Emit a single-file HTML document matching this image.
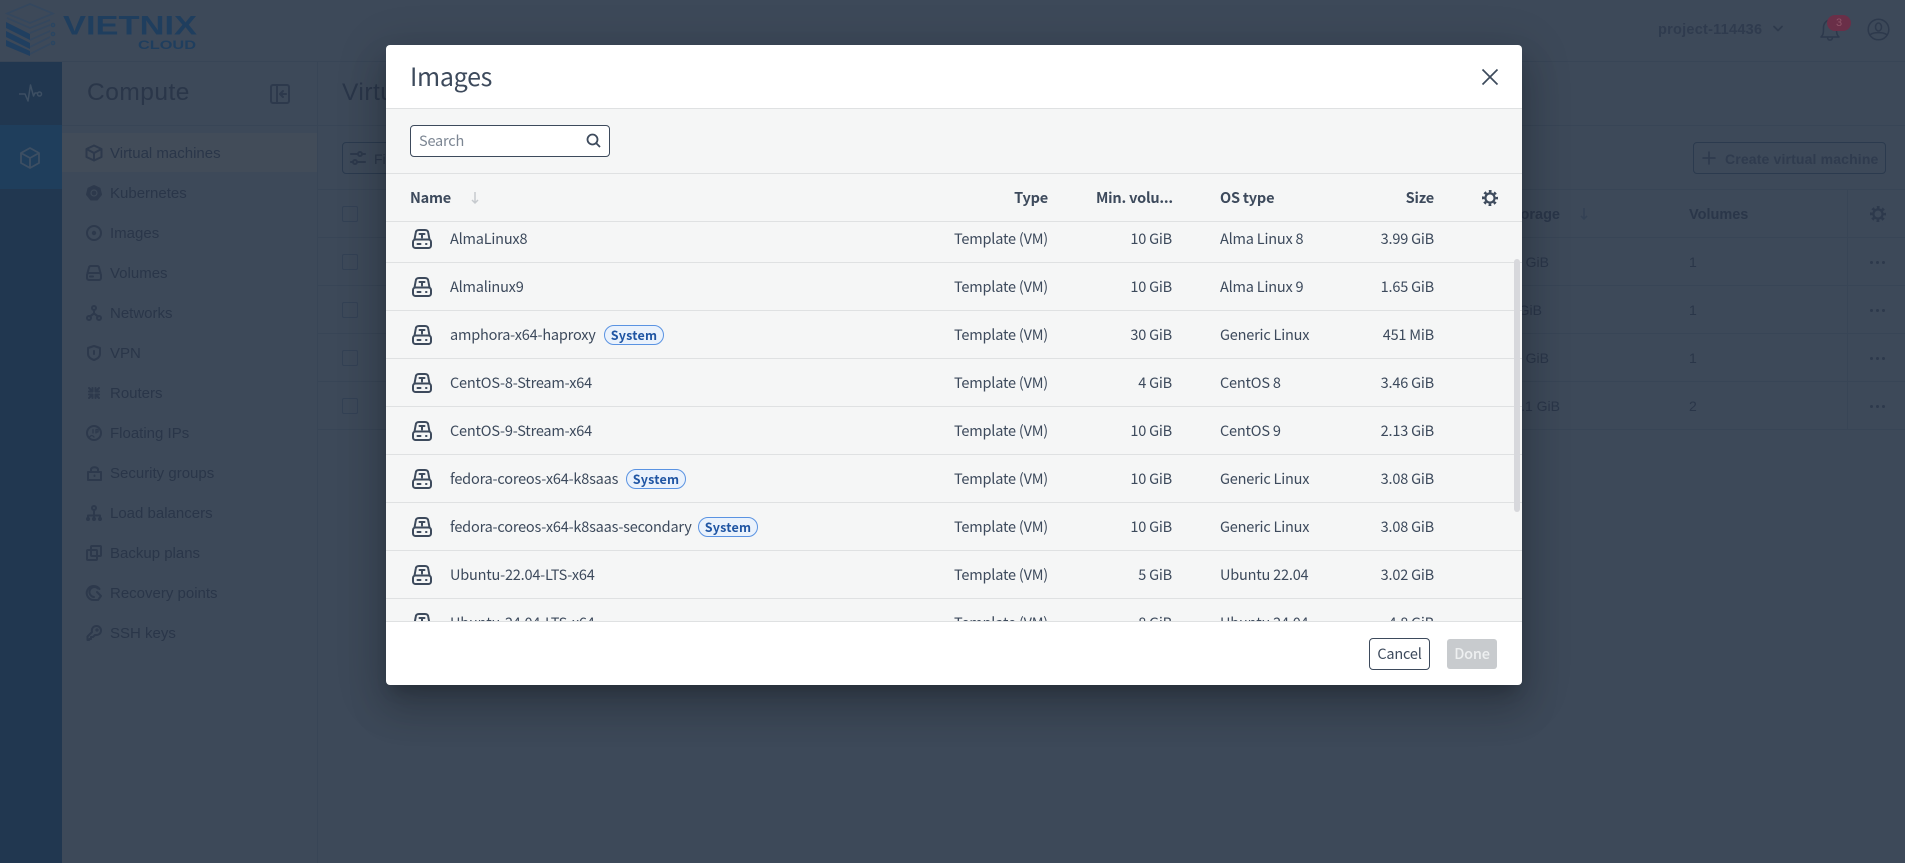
<!DOCTYPE html>
<html lang="en"><head><meta charset="utf-8"><title>Images</title>
<style>
html,body{margin:0;padding:0}
body{position:relative;width:1905px;height:863px;overflow:hidden;background:#3d4959;font-family:"Liberation Sans",sans-serif;color:#2a3649;font-size:14px}
.a{position:absolute}
.t{position:absolute;white-space:nowrap;line-height:20px;height:20px}
.ln{position:absolute;background:#384556}
svg{position:absolute;overflow:visible}
.si{fill:none;stroke:#2d394c;stroke-width:2;stroke-linecap:round;stroke-linejoin:round}
.nav{left:110px;font-size:15px;margin-top:1px}
.cb{position:absolute;left:342px;width:14px;height:14px;border:1px solid #334154;border-radius:2px}
.dots{position:absolute;left:1870px;width:18px;height:3px}
.dots i{float:left;width:3px;height:3px;border-radius:2px;background:#2d394c;margin-right:3px}
#m{position:absolute;left:386px;top:45px;width:1136px;height:640px;background:#fff;border-radius:4px;box-shadow:0 11px 15px -7px rgba(0,0,0,.2),0 24px 38px 3px rgba(0,0,0,.14),0 9px 46px 8px rgba(0,0,0,.12);font-family:"Noto Sans CJK JP","Liberation Sans",sans-serif;color:#3d4a5c;font-size:14.5px;letter-spacing:-.2px}
#m .t{line-height:20px}
#bar{position:absolute;left:0;top:64px;width:1136px;height:512px;background:#f5f6f6}
.d{position:absolute;left:0;width:1136px;height:1px;background:#dfe1e2}
#rows{position:absolute;left:0;top:177px;width:1136px;height:399px;overflow:hidden}
.r{position:relative;height:47px;border-bottom:1px solid #dfe1e2}
#rows .r:first-child{margin-top:-7px}
.r svg{left:26px;top:14px}
.n{left:64px;top:14px}
.ty{right:474px;top:14px}
.mv{right:350px;top:14px}
.os{left:834px;top:14px}
.sz{right:88px;top:14px}
.b{position:absolute;top:14px;height:18px;line-height:17px;width:58px;text-align:center;border:1px solid #5a93e2;border-radius:10px;background:#eaf2fc;color:#1f55a3;font-size:12.5px;font-weight:700;letter-spacing:.2px}
.h{font-weight:700;top:143px}
</style></head><body>

<!-- logo -->
<svg style="left:0;top:0" width="210" height="62" viewBox="0 0 210 62">
<g fill="none" stroke="#34475e" stroke-width="1.600"><path d="M7 13.500 30 4 53 13.500 30 23Z"/><path d="M7 18 30 28 50 20M30 33 50 25M30 40 50 31M30 47 50 37M30 54 50 44"/></g>
<g fill="#203f60"><path d="M6 22 30 34V40L6 28ZM6 31 30 43V49L6 37ZM6 40 30 51V56L6 46Z"/></g>
<g fill="none" stroke="#2a4561" stroke-width="1.400"><circle cx="53" cy="25" r="1.600"/><circle cx="53" cy="34" r="1.600"/><circle cx="53" cy="43" r="1.600"/></g>
<text x="63" y="34.500" font-family="Liberation Sans" font-weight="700" font-size="27" fill="#1f3e5e" textLength="134" lengthAdjust="spacingAndGlyphs">VIETNIX</text>
<text x="138" y="49" font-family="Liberation Sans" font-weight="700" font-size="12" fill="#1f3e5e" textLength="58" lengthAdjust="spacingAndGlyphs">CLOUD</text>
</svg>

<!-- top -->
<div class="ln" style="left:0;top:61px;width:1905px;height:1px"></div>
<div class="t" style="left:1658px;top:20px;font-weight:700;font-size:14.500px;color:#2f3b4e;letter-spacing:.25px">project-114436</div>
<svg style="left:1773px;top:25px" width="10" height="7" class="si"><path d="M1 1.500 5 5.500 9 1.500" stroke-width="1.600"/></svg>
<svg style="left:1820px;top:17px" width="22" height="24" class="si"><path d="M1 20C3.500 18 3.500 15 3.500 10.500 3.500 6 7 3 10 3S16.500 6 16.500 10.500C16.500 15 16.500 18 19 20ZM7.500 20.500C8 24 12 24 12.500 20.500" stroke-width="1.500"/></svg>
<div class="a" style="left:1827px;top:15px;width:24px;height:16px;border-radius:8px;background:#6a2f48;color:#8e5468;font-size:11px;line-height:16px;text-align:center">3</div>
<svg style="left:1867px;top:18px" width="23" height="23" class="si"><circle cx="11.500" cy="11.500" r="10.300" stroke-width="1.500"/><ellipse cx="11.500" cy="9" rx="3" ry="4" stroke-width="1.500"/><path d="M3.500 16.500C7 14 16 14 19.500 16.500" stroke-width="1.500"/></svg>

<!-- rail -->
<div class="a" style="left:0;top:62px;width:62px;height:801px;background:#213750"></div>
<div class="a" style="left:0;top:125px;width:62px;height:64px;background:#1f3e5c"></div>
<svg style="left:18px;top:83px" width="26" height="22" fill="none" stroke="#3d4f63" stroke-width="1.500" stroke-linejoin="round"><path d="M1 11H7L10 18 12.500 2 15.500 13 17 10H20"/><circle cx="21.500" cy="11" r="2"/></svg>
<svg style="left:20px;top:147px" width="20" height="22" fill="none" stroke="#3d4f63" stroke-width="1.800" stroke-linejoin="round"><path d="M10 1 19 6V16L10 21 1 16V6ZM1 6 10 11 19 6M10 11V21"/></svg>

<!-- sidebar -->
<div class="ln" style="left:317px;top:62px;width:1px;height:801px"></div>
<div class="ln" style="left:62px;top:125px;width:1843px;height:1px"></div>
<div class="t" style="left:87px;top:77px;height:32px;line-height:32px;font-size:24.500px;letter-spacing:.5px">Compute</div>
<svg style="left:270px;top:84px" width="20" height="20" class="si"><rect x="1" y="1" width="18" height="18" rx="2"/><path d="M7 1V19M16 10H10M13 7 10 10 13 13"/></svg>
<div class="a" style="left:62px;top:133px;width:255px;height:39px;background:#424c59"></div>

<svg style="left:86px;top:145px" width="16" height="16" class="si"><path d="M8 .5 15.500 4V12L8 15.500 .5 12V4ZM.5 4 8 8 15.500 4M8 8V15.500"/></svg>
<div class="t nav" style="top:143px">Virtual machines</div>
<svg style="left:86px;top:185px" width="16" height="16" class="si"><path d="M8 1 13.500 3.500 15 9.500 11 14.500H5L1 9.500 2.500 3.500Z" fill="#2d394c"/><circle cx="8" cy="8" r="3" stroke="#3d4959" stroke-width="1.200"/></svg>
<div class="t nav" style="top:183px">Kubernetes</div>
<svg style="left:86px;top:225px" width="16" height="16" class="si"><circle cx="8" cy="8" r="7"/><circle cx="8" cy="8" r="1.200" fill="#2d394c"/></svg>
<div class="t nav" style="top:223px">Images</div>
<svg style="left:86px;top:265px" width="16" height="16" class="si"><path d="M1.500 8 3 2.500Q3.300 1 5 1H11Q12.700 1 13 2.500L14.500 8"/><rect x="1" y="8" width="14" height="7" rx="2"/><path d="M4 11.500H7"/></svg>
<div class="t nav" style="top:263px">Volumes</div>
<svg style="left:86px;top:305px" width="16" height="16" class="si" stroke-width="1.500"><circle cx="8" cy="3" r="2"/><circle cx="3" cy="13" r="2"/><circle cx="13" cy="13" r="2"/><path d="M8 5V8.500L3.800 11.500M8 8.500 12.200 11.500"/></svg>
<div class="t nav" style="top:303px">Networks</div>
<svg style="left:87px;top:345px" width="14" height="16" class="si"><path d="M7 1 13 3V8.500C13 12 10 14 7 15 4 14 1 12 1 8.500V3ZM7 6V9"/></svg>
<div class="t nav" style="top:343px">VPN</div>
<svg style="left:88px;top:387px" width="12" height="12" class="si" stroke-width="1.800"><path d="M1 1 4.500 4.500M11 1 7.500 4.500M1 11 4.500 7.500M11 11 7.500 7.500M1 4.500H4.500V1M7.500 1V4.500H11M1 7.500H4.500V11M7.500 11V7.500H11"/></svg>
<div class="t nav" style="top:383px">Routers</div>
<svg style="left:86px;top:425px" width="16" height="16" class="si"><circle cx="8" cy="8" r="7"/><path d="M3.500 12C5 10 6.500 10 8 12M7 4.500V8M10 8V4.500H12V7H10" stroke-width="1.300"/></svg>
<div class="t nav" style="top:423px">Floating IPs</div>
<svg style="left:87px;top:465px" width="14" height="16" class="si"><rect x="1" y="7" width="13" height="8"/><path d="M4 7V4.500C4 1.500 11 1.500 11 4.500V7M7.500 10.500V11" /></svg>
<div class="t nav" style="top:463px">Security groups</div>
<svg style="left:86px;top:505px" width="16" height="16" class="si"><circle cx="8" cy="3" r="2"/><path d="M8 5V10M2 15V10.500H14V15M8 10V15"/><circle cx="2" cy="14" r="1" fill="#2d394c"/><circle cx="8" cy="14" r="1" fill="#2d394c"/><circle cx="14" cy="14" r="1" fill="#2d394c"/></svg>
<div class="t nav" style="top:503px">Load balancers</div>
<svg style="left:86px;top:545px" width="16" height="16" class="si"><rect x="1" y="5" width="10" height="10" rx="1"/><rect x="5" y="1" width="10" height="10" rx="1"/></svg>
<div class="t nav" style="top:543px">Backup plans</div>
<svg style="left:86px;top:585px" width="16" height="16" class="si"><path d="M13.500 4A7 7 0 1 0 8 15H11M12 3.500A5 5 0 1 0 8 12M11 7 15 11 12 15"/></svg>
<div class="t nav" style="top:583px">Recovery points</div>
<svg style="left:86px;top:625px" width="16" height="16" class="si"><path d="M1.500 15V11.500L6 7C5 3 8 1 10.500 1 13 1 15 3 15 5.500 15 8 13 10.500 9 10L7 12H5V14H3.500L3 15Z"/><circle cx="11" cy="5" r=".6"/></svg>
<div class="t nav" style="top:623px">SSH keys</div>

<!-- content behind -->
<div class="t" style="left:342px;top:77px;height:32px;line-height:32px;font-size:24.500px;letter-spacing:.5px">Virtual machines</div>
<div class="a" style="left:342px;top:142px;width:80px;height:30px;border:1px solid #2b3a4e;border-radius:4px"></div>
<svg style="left:350px;top:150px" width="16" height="16" class="si" stroke-width="1.500"><path d="M1 4H8M12 4H15M1 12H3M7 12H15"/><circle cx="10" cy="4" r="2"/><circle cx="5" cy="12" r="2"/></svg>
<div class="t" style="left:374px;top:149px">Fi</div>
<div class="ln" style="left:318px;top:189px;width:1587px;height:1px"></div>
<div class="ln" style="left:318px;top:237px;width:1587px;height:1px"></div>
<div class="ln" style="left:318px;top:285px;width:1587px;height:1px"></div>
<div class="ln" style="left:318px;top:333px;width:1587px;height:1px"></div>
<div class="ln" style="left:318px;top:381px;width:1587px;height:1px"></div>
<div class="ln" style="left:318px;top:429px;width:1587px;height:1px"></div>
<div class="ln" style="left:1847px;top:189px;width:1px;height:240px"></div>
<div class="cb" style="top:206px"></div><div class="cb" style="top:254px"></div><div class="cb" style="top:302px"></div><div class="cb" style="top:350px"></div><div class="cb" style="top:398px"></div>

<div class="a" style="left:1693px;top:142px;width:191px;height:30px;border:1px solid #2b3a4e;border-radius:4px"></div>
<svg style="left:1702px;top:151px" width="14" height="14" class="si"><path d="M7 1V13M1 7H13" stroke-width="1.500"/></svg>
<div class="t" style="left:1725px;top:149px;font-weight:700;font-size:14px;letter-spacing:.15px;color:#2f3b4e">Create virtual machine</div>
<div class="t" style="left:1689px;top:205px;font-weight:700;font-size:14.500px">Volumes</div>
<div class="t" style="left:1490px;width:70px;text-align:right;top:205px;font-weight:700;font-size:14.500px">Storage</div>
<svg style="left:1580px;top:208px" width="8" height="12" fill="none" stroke="#334154" stroke-width="1.500"><path d="M4 0V11M1 8 4 11 7 8"/></svg>
<svg style="left:1870px;top:206px" width="16" height="16" viewBox="0 0 16 16" fill="none" stroke="#2d394c"><circle cx="8" cy="8" r="4.600" stroke-width="2.200"/><circle cx="8" cy="8" r="6.800" stroke-width="2.400" stroke-dasharray="2.700 2.640" stroke-dashoffset="1.350"/></svg>
<div class="t" style="left:1490px;width:59px;text-align:right;top:252px">GiB</div>
<div class="t" style="left:1490px;width:52px;text-align:right;top:300px">GiB</div>
<div class="t" style="left:1490px;width:59px;text-align:right;top:348px">GiB</div>
<div class="t" style="left:1480px;width:80px;text-align:right;top:396px">.1 GiB</div>
<div class="t" style="left:1689px;top:252px">1</div><div class="t" style="left:1689px;top:300px">1</div><div class="t" style="left:1689px;top:348px">1</div><div class="t" style="left:1689px;top:396px">2</div>
<div class="dots" style="top:261px"><i></i><i></i><i></i></div>
<div class="dots" style="top:309px"><i></i><i></i><i></i></div>
<div class="dots" style="top:357px"><i></i><i></i><i></i></div>
<div class="dots" style="top:405px"><i></i><i></i><i></i></div>

<!-- modal -->
<div id="m">
  <div id="bar"></div>
  <div class="t" style="left:24px;top:13px;height:36px;line-height:36px;font-size:25px;letter-spacing:-.3px">Images</div>
  <svg style="left:1096px;top:24px" width="16" height="16" fill="none" stroke="#3d4a5c" stroke-width="1.700"><path d="M.5 .5 15.500 15.500M15.500 .5 .5 15.500"/></svg>
  <div class="d" style="top:63px"></div>
  <div class="a" style="left:24px;top:80px;width:198px;height:30px;background:#fff;border:1px solid #3d4a5c;border-radius:4px"></div>
  <div class="t" style="left:33px;top:86px;color:#7c8693">Search</div>
  <svg style="left:200px;top:88px" width="15" height="15" fill="none" stroke="#3d4a5c" stroke-width="1.800"><circle cx="6.500" cy="6.500" r="5"/><path d="M10 10 14 14"/></svg>
  <div class="d" style="top:128px"></div>

  <div class="t h" style="left:24px">Name</div>
  <svg style="left:85px;top:147px" width="8" height="12" fill="none" stroke="#c6cace" stroke-width="1.500"><path d="M4 0V11M1 8 4 11 7 8"/></svg>
  <div class="t h" style="right:474px">Type</div>
  <div class="t h" style="left:710px">Min. volu...</div>
  <div class="t h" style="left:834px">OS type</div>
  <div class="t h" style="right:88px">Size</div>
  <svg style="left:1096px;top:145px" width="16" height="16" viewBox="0 0 16 16" fill="none" stroke="#3d4a5c"><circle cx="8" cy="8" r="4.600" stroke-width="2.200"/><circle cx="8" cy="8" r="6.800" stroke-width="2.400" stroke-dasharray="2.700 2.640" stroke-dashoffset="1.350"/></svg>
  <div class="d" style="top:176px"></div>

  <div id="rows">
    <div class="r"><svg width="20" height="20"><use href="#disk"/></svg><div class="t n">AlmaLinux8</div><div class="t ty">Template (VM)</div><div class="t mv">10 GiB</div><div class="t os">Alma Linux 8</div><div class="t sz">3.99 GiB</div></div>
    <div class="r"><svg width="20" height="20"><use href="#disk"/></svg><div class="t n">Almalinux9</div><div class="t ty">Template (VM)</div><div class="t mv">10 GiB</div><div class="t os">Alma Linux 9</div><div class="t sz">1.65 GiB</div></div>
    <div class="r"><svg width="20" height="20"><use href="#disk"/></svg><div class="t n">amphora-x64-haproxy</div><div class="b" style="left:218px">System</div><div class="t ty">Template (VM)</div><div class="t mv">30 GiB</div><div class="t os">Generic Linux</div><div class="t sz">451 MiB</div></div>
    <div class="r"><svg width="20" height="20"><use href="#disk"/></svg><div class="t n">CentOS-8-Stream-x64</div><div class="t ty">Template (VM)</div><div class="t mv">4 GiB</div><div class="t os">CentOS 8</div><div class="t sz">3.46 GiB</div></div>
    <div class="r"><svg width="20" height="20"><use href="#disk"/></svg><div class="t n">CentOS-9-Stream-x64</div><div class="t ty">Template (VM)</div><div class="t mv">10 GiB</div><div class="t os">CentOS 9</div><div class="t sz">2.13 GiB</div></div>
    <div class="r"><svg width="20" height="20"><use href="#disk"/></svg><div class="t n">fedora-coreos-x64-k8saas</div><div class="b" style="left:240px">System</div><div class="t ty">Template (VM)</div><div class="t mv">10 GiB</div><div class="t os">Generic Linux</div><div class="t sz">3.08 GiB</div></div>
    <div class="r"><svg width="20" height="20"><use href="#disk"/></svg><div class="t n">fedora-coreos-x64-k8saas-secondary</div><div class="b" style="left:312px">System</div><div class="t ty">Template (VM)</div><div class="t mv">10 GiB</div><div class="t os">Generic Linux</div><div class="t sz">3.08 GiB</div></div>
    <div class="r"><svg width="20" height="20"><use href="#disk"/></svg><div class="t n">Ubuntu-22.04-LTS-x64</div><div class="t ty">Template (VM)</div><div class="t mv">5 GiB</div><div class="t os">Ubuntu 22.04</div><div class="t sz">3.02 GiB</div></div>
    <div class="r"><svg width="20" height="20"><use href="#disk"/></svg><div class="t n">Ubuntu-24.04-LTS-x64</div><div class="t ty">Template (VM)</div><div class="t mv">8 GiB</div><div class="t os">Ubuntu 24.04</div><div class="t sz">4.8 GiB</div></div>
  </div>
  <div class="a" style="left:1128px;top:214px;width:6px;height:253px;background:#d7d8dc;border-radius:3px"></div>
  <div class="d" style="top:576px"></div>
  <div class="a" style="left:983px;top:593px;width:59px;height:30px;border:1px solid #3d4a5c;border-radius:4px;background:#fff;text-align:center;line-height:30px">Cancel</div>
  <div class="a" style="left:1061px;top:594px;width:50px;height:30px;border-radius:3px;background:#c8cbce;color:#eef0f1;text-align:center;line-height:30px;font-weight:500">Done</div>
</div>

<svg width="0" height="0" style="left:0;top:0"><defs>
<g id="disk" fill="none" stroke="#3d4a5c" stroke-width="2" stroke-linecap="round" stroke-linejoin="round">
<path d="M2.500 10.500 3.800 3.500Q4.200 1 7 1H13Q15.800 1 16.200 3.500L17.500 10.500"/>
<rect x="1" y="10.500" width="18" height="8.500" rx="2.500"/>
<path d="M7.500 5H12.500M10 5V8.500M5.500 15H8.500M14 15H14.500"/>
</g></defs></svg>
</body></html>
